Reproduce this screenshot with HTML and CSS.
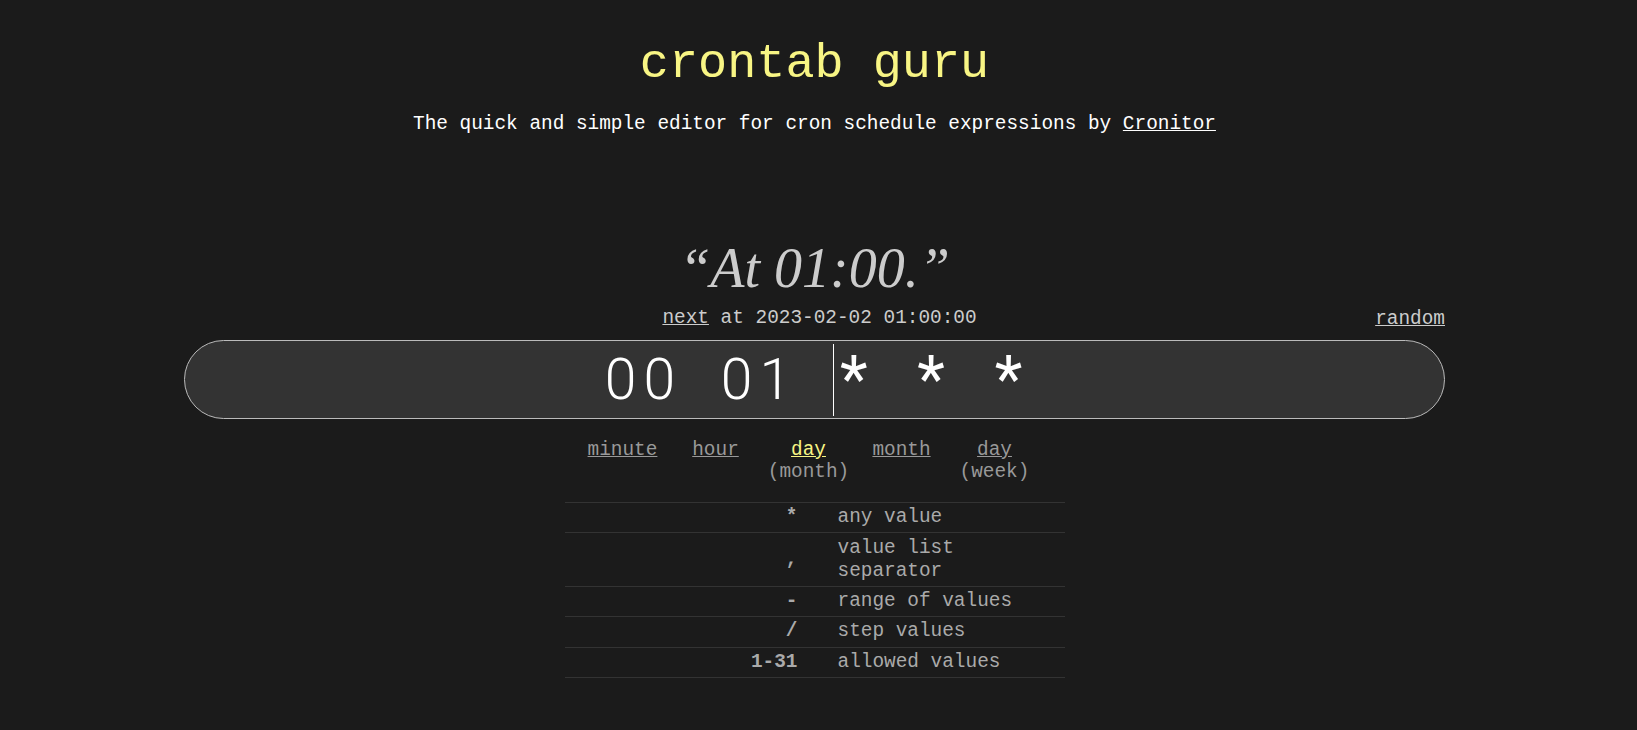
FILE: index.html
```html
<!DOCTYPE html>
<html>
<head>
<meta charset="utf-8">
<link rel="stylesheet" href="styles.css">
</head>
<body>
<div class="page">
  <h1 class="title">crontab guru</h1>
  <p class="subtitle">The quick and simple editor for cron schedule expressions by <a href="#">Cronitor</a></p>
  <div class="human">“At 01:00.”</div>
  <div class="nextrow">
    <div class="next"><a href="#">next</a> at 2023-02-02 01:00:00</div>
    <a class="random" href="#">random</a>
  </div>
  <div class="input">
    <span class="c">0</span><span class="c">0</span><span class="c"></span><span class="c">0</span><span class="c">1</span><span class="c"></span><span class="caret"></span><span class="c star">*</span><span class="c"></span><span class="c star">*</span><span class="c"></span><span class="c star">*</span>
  </div>
  <div class="parts">
    <div class="part"><a href="#">minute</a></div>
    <div class="part"><a href="#">hour</a></div>
    <div class="part active"><a href="#">day</a><span>(month)</span></div>
    <div class="part"><a href="#">month</a></div>
    <div class="part"><a href="#">day</a><span>(week)</span></div>
  </div>
  <table class="legend">
    <tr><th>*</th><td>any value</td></tr>
    <tr><th>,</th><td>value list separator</td></tr>
    <tr><th>-</th><td>range of values</td></tr>
    <tr><th>/</th><td>step values</td></tr>
    <tr><th>1-31</th><td>allowed values</td></tr>
  </table>
</div>
</body>
</html>
```
FILE: styles.css
```css
html, body {
  margin: 0;
  padding: 0;
  background: #1b1b1b;
}
body {
  padding-right: 8px;
  font-family: "Liberation Mono", monospace;
  font-size: 19.4px;
  color: #ddd;
}
.page {
  width: 1261px;
  margin: 0 auto;
  display: flex;
  flex-direction: column;
  align-items: center;
}
.title {
  margin: 0;
  padding-top: 37px;
  font-weight: normal;
  font-size: 48.5px;
  line-height: 56px;
  color: #f8f584;
}
.subtitle {
  margin: 20px 0 0;
  line-height: 23px;
  color: #fff;
}
.subtitle a {
  color: #fff;
}
.human {
  margin-top: 97px;
  font-family: "Liberation Serif", serif;
  font-style: italic;
  font-size: 56px;
  line-height: 70px;
  color: #ccc;
}
.nextrow {
  align-self: stretch;
  position: relative;
  display: flex;
  justify-content: center;
  margin-top: 4px;
  padding-left: 10px;
  line-height: 23px;
  color: #ccc;
}
.next a {
  color: #ccc;
}
.random {
  position: absolute;
  right: 0;
  top: 1px;
  color: #ccc;
}
.input {
  align-self: stretch;
  box-sizing: border-box;
  height: 79px;
  margin-top: 10px;
  border: 1px solid #bbb;
  border-radius: 40px;
  background: #333;
  display: flex;
  justify-content: center;
  align-items: center;
  color: #fff;
  font-family: Roboto, sans-serif;
  font-weight: 300;
  font-size: 57px;
}
.c {
  display: inline-block;
  width: 38.7px;
  text-align: center;
  line-height: 75px;
}
.star {
  font-size: 64px;
  font-weight: 400;
}
.caret {
  width: 1px;
  height: 72px;
  background: #fff;
}
.parts {
  display: flex;
  margin-top: 20px;
  padding-right: 12px;
  line-height: 22px;
}
.part {
  width: 93px;
  display: flex;
  flex-direction: column;
  align-items: center;
  color: #999;
}
.part a {
  color: #999;
}
.part.active a {
  color: #f8f584;
}
.legend {
  margin-top: 19px;
  width: 500px;
  border-collapse: collapse;
  border-bottom: 1px solid #333;
  color: #aaa;
  line-height: 23px;
}
.legend tr {
  border-top: 1px solid #333;
}
.legend th {
  width: 233px;
  text-align: right;
  padding: 3.2px 20px 3.2px 0;
  font-weight: bold;
  color: #aaa;
}
.legend td {
  text-align: left;
  padding: 3.2px 20px;
}
```
